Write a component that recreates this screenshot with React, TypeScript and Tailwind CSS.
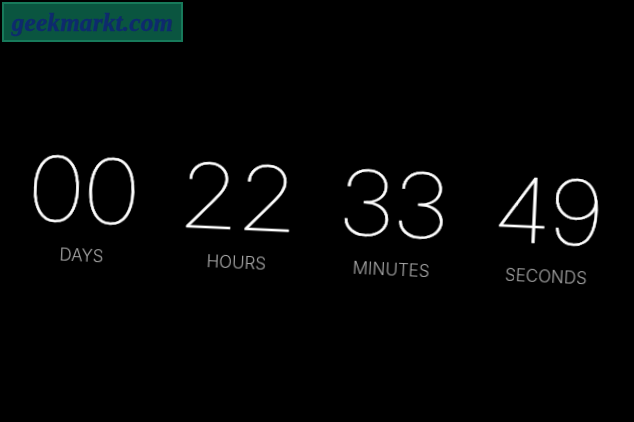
const units = [
  { value: "00", label: "DAYS" },
  { value: "22", label: "HOURS" },
  { value: "33", label: "MINUTES" },
  { value: "49", label: "SECONDS" },
];

export default function App() {
  return (
    <div className="w-[634px] h-[422px] overflow-hidden bg-black flex flex-col">
      <div className="ml-[2px] mt-[2px] w-[181px] h-[40px] bg-[#0a5540] border-2 border-[#17795a] flex items-center justify-center">
        <span className="font-['Liberation_Serif',serif] font-bold italic text-[25px] tracking-[0.3px] text-[#0e2a6e] leading-none [-webkit-text-stroke:0.4px_#0e2a6e]">geekmarkt.com</span>
      </div>
      <div className="mt-[113px] ml-[6px] w-[620px] grid grid-cols-4 rotate-[2.6deg] will-change-transform">
        {units.map((u) => (
          <div key={u.label} className="flex flex-col items-center">
            <div className="mr-[4px] font-['Inter',sans-serif] font-thin text-[89px] tracking-[-3px] leading-[92px] text-white scale-x-[1.12] [-webkit-text-stroke:0.5px_white]">{u.value}</div>
            <div className="mt-[9px] font-['Inter',sans-serif] font-light text-[17px] leading-[20px] text-[#a9a9a9]">{u.label}</div>
          </div>
        ))}
      </div>
    </div>
  );
}
